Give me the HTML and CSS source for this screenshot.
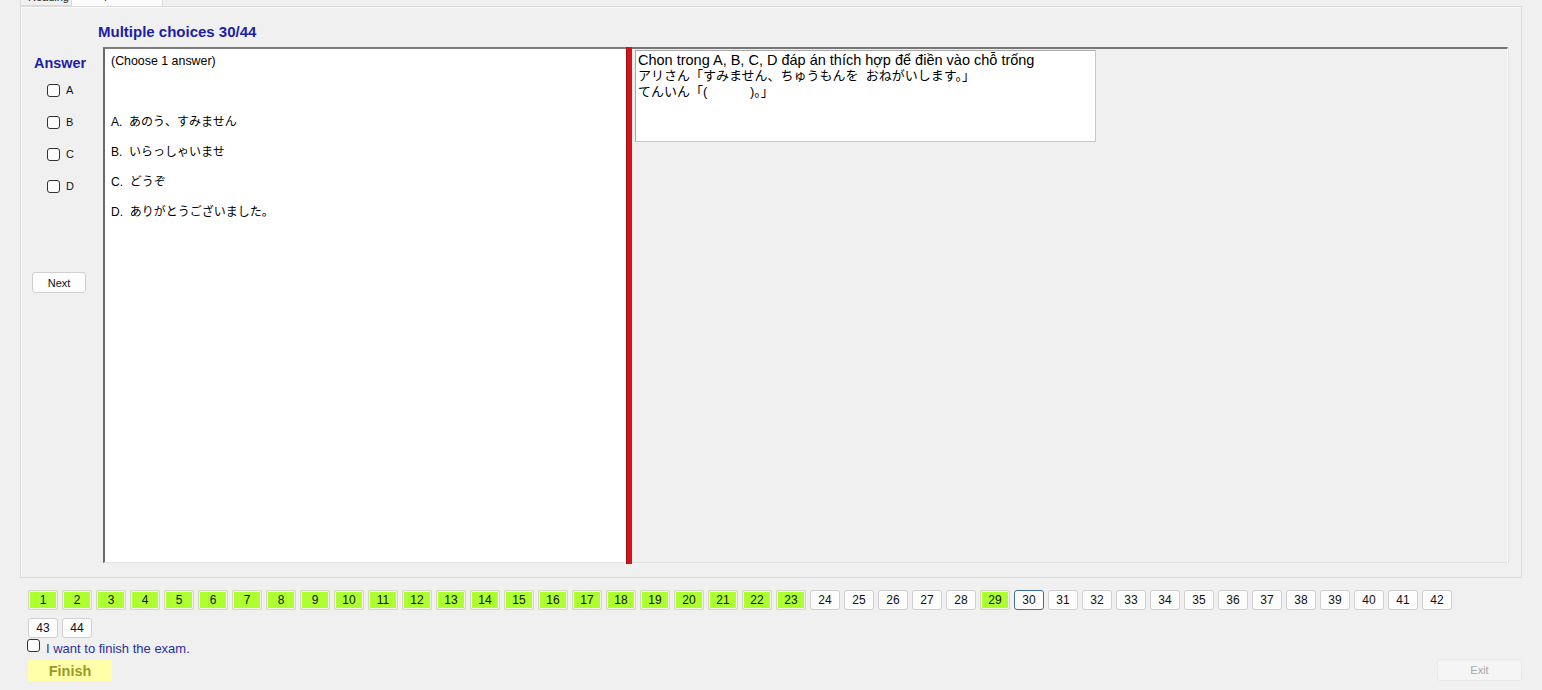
FILE: index.html
```html
<!DOCTYPE html>
<html lang="vi">
<head>
<meta charset="utf-8">
<title>Multiple choices</title>
<link rel="stylesheet" href="styles.css">
</head>
<body>
<div class="app">
  <div class="tabs">
    <div class="tab"><span class="tab-text">Reading</span></div>
    <div class="tab tab-active"><span class="tab-text">Multiple choice</span></div>
  </div>
  <div class="panel">
    <div class="title">Multiple choices 30/44</div>
    <div class="main">
      <div class="answer-col">
        <div class="answer-label">Answer</div>
        <div class="opt-row"><span class="cb"></span><span class="opt-letter">A</span></div>
        <div class="opt-row"><span class="cb"></span><span class="opt-letter">B</span></div>
        <div class="opt-row"><span class="cb"></span><span class="opt-letter">C</span></div>
        <div class="opt-row"><span class="cb"></span><span class="opt-letter">D</span></div>
        <button class="btn-next">Next</button>
      </div>
      <div class="choices-box">
        <div class="choose">(Choose 1 answer)</div>
        <div class="choices">
          <div class="choice">A.&nbsp; あのう、すみません</div>
          <div class="choice">B.&nbsp; いらっしゃいませ</div>
          <div class="choice">C.&nbsp; どうぞ</div>
          <div class="choice">D.&nbsp; ありがとうございました。</div>
        </div>
      </div>
      <div class="splitter"></div>
      <div class="question-area">
        <div class="question-box">
          <div class="q-line">Chon trong A, B, C, D đáp án thích hợp để điền vào chỗ trống</div>
          <div class="q-line jp">アリさん「すみません、ちゅうもんを&nbsp; おねがいします。」</div>
          <div class="q-line jp">てんいん「(　　　 )。」</div>
        </div>
      </div>
    </div>
  </div>
  <div class="bottom">
    <div class="nums">
      <span class="num done">1</span><span class="num done">2</span><span class="num done">3</span><span class="num done">4</span><span class="num done">5</span><span class="num done">6</span><span class="num done">7</span><span class="num done">8</span><span class="num done">9</span><span class="num done">10</span><span class="num done">11</span><span class="num done">12</span><span class="num done">13</span><span class="num done">14</span><span class="num done">15</span><span class="num done">16</span><span class="num done">17</span><span class="num done">18</span><span class="num done">19</span><span class="num done">20</span><span class="num done">21</span><span class="num done">22</span><span class="num done">23</span><span class="num">24</span><span class="num">25</span><span class="num">26</span><span class="num">27</span><span class="num">28</span><span class="num done">29</span><span class="num current">30</span><span class="num">31</span><span class="num">32</span><span class="num">33</span><span class="num">34</span><span class="num">35</span><span class="num">36</span><span class="num">37</span><span class="num">38</span><span class="num">39</span><span class="num">40</span><span class="num">41</span><span class="num">42</span><span class="num">43</span><span class="num">44</span>
    </div>
    <div class="finish-check"><span class="cb cb-finish"></span><span class="finish-text">I want to finish the exam.</span></div>
    <div class="actions">
      <button class="btn-finish">Finish</button>
      <button class="btn-exit" disabled>Exit</button>
    </div>
  </div>
</div>
</body>
</html>
```
FILE: styles.css
```css
* { box-sizing: border-box; }
html, body {
  margin: 0;
  padding: 0;
  background: #f0f0f0;
  font-family: "Liberation Sans", "Noto Sans CJK JP", Arial, sans-serif;
  color: #000;
}
.app {
  width: 1542px;
  height: 690px;
  overflow: hidden;
  position: relative;
}
.tabs {
  display: flex;
  height: 6px;
  padding-left: 20px;
}
.tab {
  width: 52px;
  height: 6px;
  overflow: hidden;
  border-left: 1px solid #d9d9d9;
  border-right: 1px solid #d9d9d9;
  border-bottom: 1px solid #d9d9d9;
  background: #f0f0f0;
  font-size: 11px;
  line-height: 12px;
  padding-left: 7px;
}
.tab-active {
  width: 91px;
  background: #fbfbfb;
  border-bottom: none;
  border-left: none;
  padding-left: 9px;
}
.tab-text {
  display: block;
  margin-top: -9px;
  white-space: nowrap;
  color: #222;
}
.tab-active .tab-text {
  margin-top: -11px;
}
.panel {
  margin-left: 20px;
  width: 1502px;
  height: 572px;
  border: 1px solid #dadada;
  box-shadow: inset 1px 1px 0 #fafafa;
  background: #f0f0f0;
}
.title {
  margin: 17px 0 0 77px;
  font-size: 15px;
  font-weight: bold;
  line-height: 16px;
  color: #1d1da6;
}
.main {
  display: flex;
  margin-top: 7px;
  height: 516px;
}
.answer-col {
  width: 82px;
  display: flex;
  flex-direction: column;
  align-items: flex-start;
}
.answer-label {
  margin: 8px 0 0 13px;
  font-size: 14.4px;
  font-weight: bold;
  line-height: 16px;
  color: #1d1da6;
}
.opt-row {
  display: flex;
  align-items: center;
  height: 32px;
  padding-left: 26px;
  gap: 6px;
}
.answer-label + .opt-row { margin-top: 3px; }
.cb {
  display: inline-block;
  width: 13px;
  height: 13px;
  border: 1px solid #333;
  border-radius: 3px;
  background: #fff;
}
.opt-letter {
  font-size: 11px;
  color: #111;
}
.btn-next {
  margin: 70px 0 0 11px;
  width: 54px;
  height: 21px;
  padding: 0;
  border: 1px solid #d0d0d0;
  border-radius: 3px;
  background: #fdfdfd;
  font-family: inherit;
  font-size: 11px;
  color: #111;
}
.choices-box {
  width: 523px;
  height: 516px;
  background: #fff;
  border-top: 2px solid #7e7e7e;
  border-left: 2px solid #6a6a6a;
  border-bottom: 1px solid #e3e3e3;
  padding: 4px 0 0 6px;
  font-size: 12.4px;
}
.choose {
  line-height: 16px;
}
.choices {
  margin-top: 38px;
  font-size: 12px;
}
.choice {
  line-height: 30px;
}
.splitter {
  width: 6px;
  height: 517px;
  background: #d3141a;
  border-left: 1px solid #a00d10;
}
.question-area {
  width: 876px;
  height: 516px;
  border-top: 2px solid #777;
  border-right: 1px solid #fff;
  border-bottom: 1px solid #e0e0e0;
  box-shadow: 1px 0 0 #e0e0e0;
  padding: 1px 0 0 3px;
}
.question-box {
  width: 461px;
  height: 92px;
  background: #fff;
  border: 1px solid #c8c8c8;
  border-top-color: #a8a8a8;
  border-left-color: #a8a8a8;
  padding: 1px 0 0 2px;
  font-size: 14.5px;
  line-height: 16px;
  color: #000;
}
.q-line { white-space: nowrap; }
.q-line.jp { font-size: 13px; }
.bottom {
  padding-left: 28px;
  padding-top: 12px;
}
.nums {
  display: flex;
  flex-wrap: wrap;
  width: 1440px;
  column-gap: 4px;
  row-gap: 8px;
}
.num {
  width: 30px;
  height: 20px;
  display: flex;
  align-items: center;
  justify-content: center;
  font-size: 12px;
  border: 1px solid #cfcfcf;
  border-radius: 3px;
  background: #fdfdfd;
  color: #111;
}
.num.done {
  background: #adff2f;
  border-color: #d6d6c8;
  border-radius: 2px;
  box-shadow: inset 0 0 0 1px #f4f4ea;
}
.num.current {
  border-color: #3f6f9a;
  background: #fff;
}
.finish-check {
  display: flex;
  align-items: center;
  gap: 6px;
  margin: 2px 0 0 -1px;
  height: 16px;
}
.cb-finish {
  width: 13px;
  height: 13px;
  margin-top: -5px;
}
.finish-text {
  font-size: 13px;
  color: #2e2e9c;
}
.actions {
  display: flex;
  justify-content: space-between;
  align-items: flex-start;
  margin-top: 4px;
  padding-right: 20px;
}
.btn-finish {
  width: 84px;
  height: 21px;
  padding: 0;
  border: none;
  background: #ffffaa;
  font-family: inherit;
  font-size: 14.5px;
  font-weight: bold;
  color: #9a9a26;
}
.btn-exit {
  width: 85px;
  height: 22px;
  margin-top: -1px;
  padding: 0;
  border: 1px solid #e8e8e8;
  border-radius: 3px;
  background: #f5f5f5;
  font-family: inherit;
  font-size: 11px;
  color: #a8a8a8;
}
```
